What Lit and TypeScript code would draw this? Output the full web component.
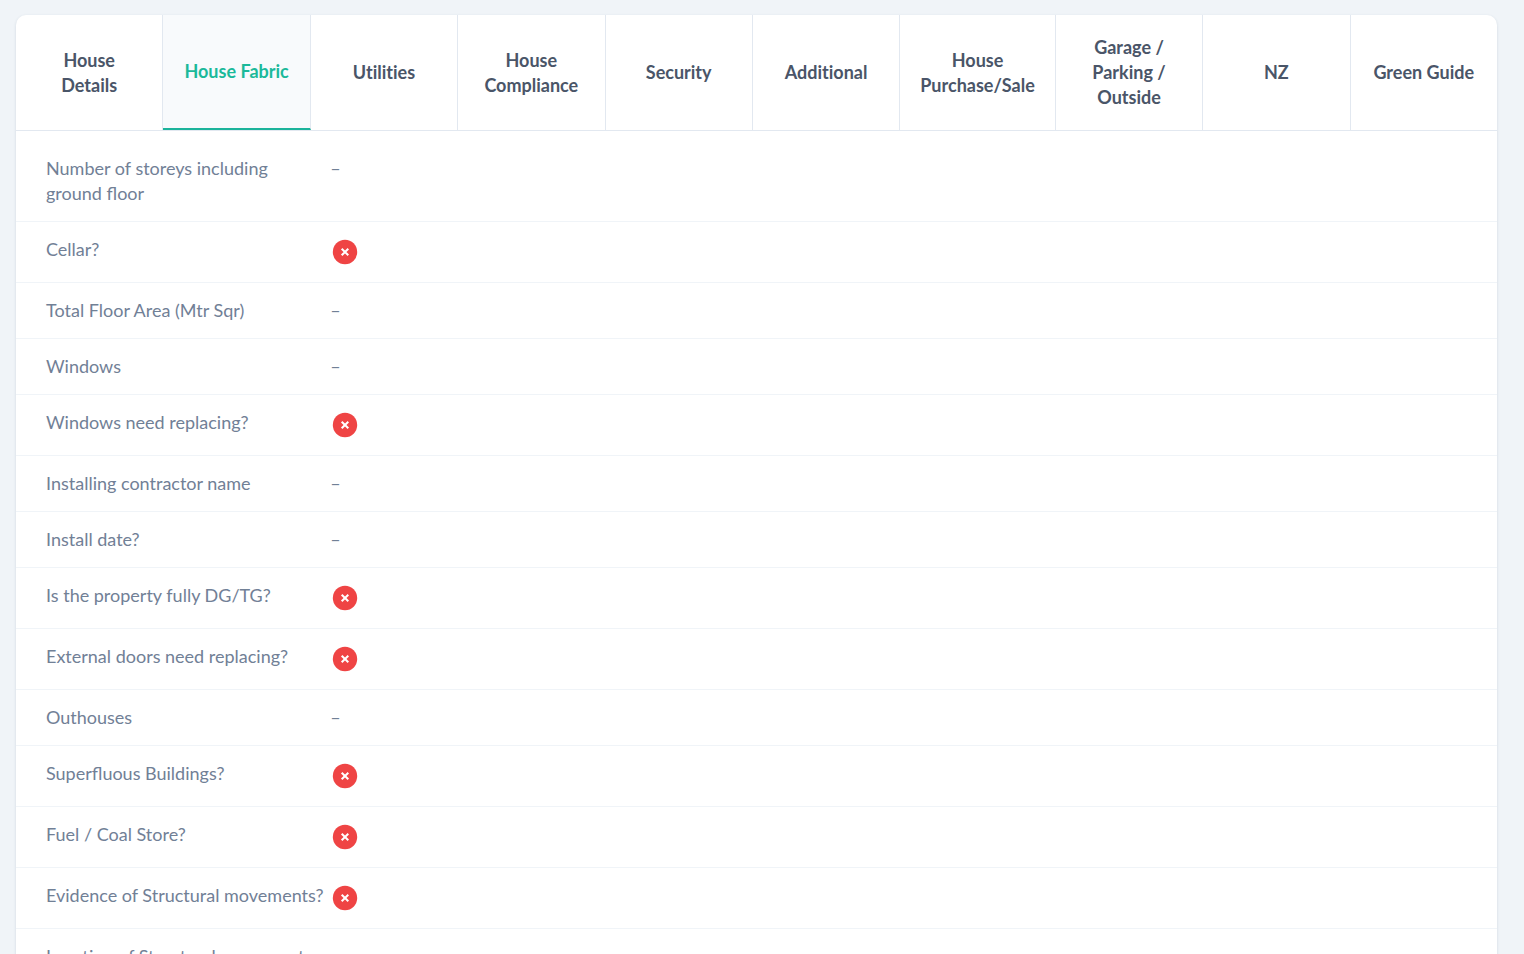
import { LitElement, html, css } from "lit";
import { customElement, state } from "lit/decorators.js";
import { classMap } from "lit/directives/class-map.js";

const TABS = [
  "House Details",
  "House Fabric",
  "Utilities",
  "House Compliance",
  "Security",
  "Additional",
  "House Purchase/Sale",
  "Garage / Parking / Outside",
  "NZ",
  "Green Guide",
];

type Field = { label: string; value: string | boolean };

const FIELDS: Field[] = [
  { label: "Number of storeys including ground floor", value: "" },
  { label: "Cellar?", value: false },
  { label: "Total Floor Area (Mtr Sqr)", value: "" },
  { label: "Windows", value: "" },
  { label: "Windows need replacing?", value: false },
  { label: "Installing contractor name", value: "" },
  { label: "Install date?", value: "" },
  { label: "Is the property fully DG/TG?", value: false },
  { label: "External doors need replacing?", value: false },
  { label: "Outhouses", value: "" },
  { label: "Superfluous Buildings?", value: false },
  { label: "Fuel / Coal Store?", value: false },
  { label: "Evidence of Structural movements?", value: false },
  { label: "Location of Structural movements", value: "" },
];

@customElement("app-root")
export class AppRoot extends LitElement {
  static styles = css`
    :host {
      display: block;
      box-sizing: border-box;
      height: 100vh;
      overflow-y: auto;
      scrollbar-width: none;
      padding: 15px 27px 15px 16px;
      background: #f0f4f8;
      color: #718096;
      font: 400 18px/25px Lato, "Open Sans", sans-serif;
    }
    .card {
      background: #fff;
      border-radius: 10px;
      box-shadow: 0 1px 3px rgba(45, 70, 100, 0.16);
    }
    .tabs {
      display: flex;
      border-bottom: 1px solid #e2e8f0;
    }
    .tab {
      flex: 1 1 0;
      margin: 0;
      padding: 20px;
      border: 0 solid #e2e8f0;
      border-right-width: 1px;
      background: none;
      color: #4a5568;
      font: inherit;
      font-weight: 700;
      font-variant-ligatures: none;
      text-align: center;
      cursor: pointer;
    }
    .tab:first-child {
      border-top-left-radius: 10px;
    }
    .tab:last-child {
      border-right-width: 0;
      border-top-right-radius: 10px;
    }
    .active {
      background: #f8fafc;
      color: #1bb99a;
      border-bottom: 2px solid #1bb39b;
    }
    .fields {
      margin: 0;
      padding: 10px 0;
    }
    .row {
      display: flex;
      padding: 15px 30px;
      border-bottom: 1px solid #f0f4f8;
    }
    .label {
      box-sizing: border-box;
      flex: 0 0 20%;
      padding-right: 4px;
    }
    .value {
      flex: 1;
      margin: 0;
    }
    .no {
      display: block;
      width: 30px;
      height: 30px;
    }
  `;

  @state() private selected = 1;

  private renderValue(value: string | boolean) {
    if (value === false) {
      return html`<svg class="no" viewBox="0 0 30 30" role="img" aria-label="No">
        <circle cx="15" cy="15" r="12.2" fill="#ef4444" />
        <path d="M11.7 11.7l6.6 6.6M18.3 11.7l-6.6 6.6" stroke="#fff" stroke-width="2" fill="none" />
      </svg>`;
    }
    return value || "–";
  }

  render() {
    return html`
      <main class="card">
        <div class="tabs" role="tablist">
          ${TABS.map(
            (name, i) => html`<button
              class=${classMap({ tab: true, active: i === this.selected })}
              role="tab"
              aria-selected=${i === this.selected}
              @click=${() => (this.selected = i)}
            >${name}</button>`
          )}
        </div>
        <dl class="fields" role="tabpanel">
          ${FIELDS.map(
            (f) => html`<div class="row">
              <dt class="label">${f.label}</dt>
              <dd class="value">${this.renderValue(f.value)}</dd>
            </div>`
          )}
        </dl>
      </main>
    `;
  }
}
